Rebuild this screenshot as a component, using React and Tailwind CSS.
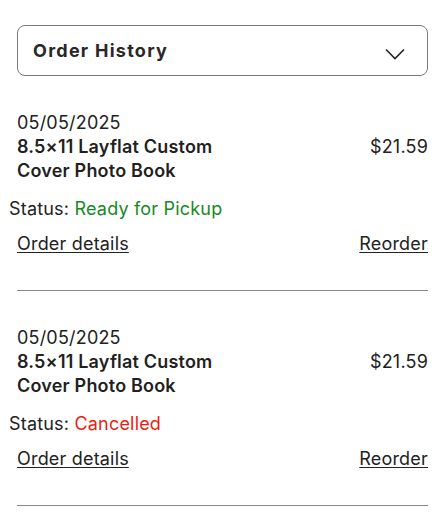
import React from "react";

const orders = [
  {
    date: "05/05/2025",
    title: "8.5×11 Layflat Custom Cover Photo Book",
    price: "$21.59",
    status: "Ready for Pickup",
    statusClass: "text-[#16891f]",
  },
  {
    date: "05/05/2025",
    title: "8.5×11 Layflat Custom Cover Photo Book",
    price: "$21.59",
    status: "Cancelled",
    statusClass: "text-[#ee1c12]",
  },
];

const App = () => {
  return (
    <div className="min-h-screen bg-white px-[17px] pt-[25px] text-[#222] tracking-[0.012em] font-['Inter','Liberation_Sans',sans-serif]">
      {/* Dropdown header */}
      <button className="flex h-[51px] w-full items-center justify-between rounded-lg border border-[#7a7a7a] pl-[15px] pr-[22px]">
        <span className="text-[18px] font-bold tracking-[0.07em] text-[#2a2727]">Order History</span>
        <svg width="20" height="12" viewBox="0 0 20 12" className="mt-[6px]" fill="none">
          <path d="M1 1.5 L10 10.5 L19 1.5" stroke="#222" strokeWidth="1.6" />
        </svg>
      </button>

      <div className="mt-[35px]">
        {orders.map((order, i) => (
          <div key={i} className="border-b border-[#8e8686] pb-[34px] mb-[35px]">
            <div className="text-[18px] leading-6">{order.date}</div>
            <div className="flex justify-between">
              <div className="w-[230px] text-[18px] font-semibold leading-6 text-[#231f1f]">{order.title}</div>
              <div className="text-[18px] leading-6">{order.price}</div>
            </div>
            <div className="-ml-2 mt-[14px] text-[18px] leading-6">
              Status: <span className={order.statusClass}>{order.status}</span>
            </div>
            <div className="mt-[11px] flex justify-between text-[18px] leading-6">
              <a className="underline underline-offset-2 decoration-1">Order details</a>
              <a className="underline underline-offset-2 decoration-1">Reorder</a>
            </div>
          </div>
        ))}
      </div>
    </div>
  );
};

export default App;
